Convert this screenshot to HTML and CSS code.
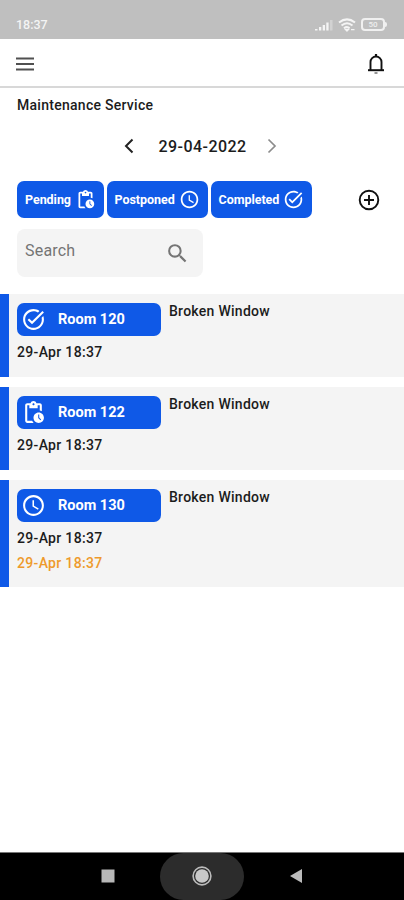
FILE: index.html
```
<!DOCTYPE html>
<html lang="en">
<head>
<meta charset="utf-8">
<title>Maintenance Service</title>
<link rel="stylesheet" href="styles.css">
</head>
<body>
<svg class="sprite" aria-hidden="true">
  <symbol id="pending" viewBox="0 0 24 24"><path d="M17 12c-2.76 0-5 2.24-5 5s2.24 5 5 5 5-2.24 5-5-2.24-5-5-5zm1.65 7.35L16.5 17.2V14h1v2.79l1.85 1.85-.7.71zM18 3h-3.18C14.4 1.84 13.3 1 12 1s-2.4.84-2.82 2H6c-1.1 0-2 .9-2 2v15c0 1.1.9 2 2 2h6.11c-.59-.57-1.07-1.25-1.42-2H6V5h2v3h8V5h2v5.08c.71.1 1.38.31 2 .6V5c0-1.1-.9-2-2-2zm-6 2c-.55 0-1-.45-1-1s.45-1 1-1 1 .45 1 1-.45 1-1 1z"/></symbol>
  <symbol id="clock" viewBox="0 0 24 24"><path d="M11.99 2C6.47 2 2 6.48 2 12s4.47 10 9.99 10C17.52 22 22 17.52 22 12S17.52 2 11.99 2zM12 20c-4.42 0-8-3.58-8-8s3.58-8 8-8 8 3.58 8 8-3.58 8-8 8zm.5-13H11v6l5.25 3.15.75-1.23-4.5-2.67z"/></symbol>
  <symbol id="done" viewBox="0 0 24 24"><path d="M22 5.18L10.59 16.6l-4.24-4.24 1.41-1.41 2.83 2.83 10-10L22 5.18zm-2.21 5.04c.13.57.21 1.17.21 1.78 0 4.42-3.58 8-8 8s-8-3.58-8-8 3.58-8 8-8c1.58 0 3.04.46 4.28 1.25l1.44-1.44C16.1 2.67 14.13 2 12 2 6.48 2 2 6.48 2 12s4.48 10 10 10 10-4.48 10-10c0-1.19-.22-2.33-.6-3.39l-1.61 1.61z"/></symbol>
</svg>
<div class="screen">
  <div class="status">
    <span class="time">18:37</span>
    <div class="indicators">
      <svg width="20" height="12" viewBox="0 0 20 12"><path d="M1 11.500V10h2.500v1.500zM5 11.500V8h2.300v3.500zM8.700 11.500V6H11v5.500zM12.300 11.500V3.500h2.300v8z" fill="#f4f4f4"/><path d="M16 11.500V1h2.500v10.500z" fill="#d2d2d2"/></svg>
      <svg width="18" height="14" viewBox="0 0 18 14" fill="none" stroke="#f4f4f4" stroke-width="2"><path d="M1 4.500Q9-1.800 17 4.500M3.500 7.500Q9 3 14.500 7.500M6 10.200Q9 7.800 11.500 10.200"/><path d="M7.500 11.500L9 13l1.500-1.500zM13 11.700h3.500" stroke-width="1.300"/></svg>
      <div class="battery"><span class="cell">50</span><span class="nub"></span></div>
    </div>
  </div>
  <header class="topbar">
    <svg width="20" height="16" viewBox="0 0 20 16"><path d="M1 2.500h18M1 8h18M1 13.500h18" stroke="#505050" stroke-width="2.200"/></svg>
    <svg width="18" height="22" viewBox="0 0 18 22" fill="none" stroke="#111"><path d="M3.500 17V9a5.500 5.500 0 0 1 11 0v8" stroke-width="1.900"/><path d="M1 17.200h16" stroke-width="2"/><path d="M9 1v2.500" stroke-width="2.200"/><path d="M7.500 20h3" stroke="#888" stroke-width="1.800"/></svg>
  </header>
  <h1 class="title">Maintenance Service</h1>
  <div class="date">
    <svg width="12" height="16" viewBox="0 0 12 16" fill="none" stroke="#222" stroke-width="2"><path d="M9.500 1.500L3 8l6.500 6.500"/></svg>
    <span>29-04-2022</span>
    <svg width="12" height="16" viewBox="0 0 12 16" fill="none" stroke="#8c8c8c" stroke-width="1.700"><path d="M2.500 1.500L9 8l-6.500 6.500"/></svg>
  </div>
  <div class="filters">
    <button class="filter pending"><span>Pending</span><svg><use href="#pending"/></svg></button>
    <button class="filter postponed"><span>Postponed</span><svg><use href="#clock"/></svg></button>
    <button class="filter completed"><span>Completed</span><svg><use href="#done"/></svg></button>
    <svg class="add" viewBox="0 0 22 22" fill="none" stroke="#111" stroke-width="1.900"><circle cx="11" cy="11" r="9.300"/><path d="M11 6v10M6 11h10"/></svg>
  </div>
  <div class="search">
    <span>Search</span>
    <svg viewBox="0 0 24 24"><path d="M15.500 14h-.79l-.28-.27A6.471 6.471 0 0 0 16 9.500 6.500 6.500 0 1 0 9.500 16c1.610 0 3.090-.59 4.230-1.570l.27.28v.79l5 4.990L20.490 19l-4.990-5zm-6 0C7.010 14 5 11.990 5 9.500S7.010 5 9.500 5 14 7.010 14 9.500 11.990 14 9.500 14z"/></svg>
  </div>
  <main class="list">
    <article class="card">
      <div class="room"><svg><use href="#done"/></svg><span>Room 120</span></div>
      <p class="issue">Broken Window</p>
      <p class="stamp">29-Apr 18:37</p>
    </article>
    <article class="card">
      <div class="room"><svg><use href="#pending"/></svg><span>Room 122</span></div>
      <p class="issue">Broken Window</p>
      <p class="stamp">29-Apr 18:37</p>
    </article>
    <article class="card tall">
      <div class="room"><svg><use href="#clock"/></svg><span>Room 130</span></div>
      <p class="issue">Broken Window</p>
      <p class="stamp">29-Apr 18:37</p>
      <p class="stamp late">29-Apr 18:37</p>
    </article>
  </main>
  <nav class="nav">
    <svg width="14" height="14"><rect x="0.500" y="0.500" width="13" height="13" fill="#b8b8b8"/></svg>
    <div class="home"><svg width="20" height="20" viewBox="0 0 20 20"><circle cx="10" cy="10" r="8.900" fill="none" stroke="#bbb" stroke-width="1.600"/><circle cx="10" cy="10" r="6.800" fill="#c8c8c8"/></svg></div>
    <svg width="14" height="16" viewBox="0 0 14 16"><path d="M13 1v14L1 8z" fill="#bbb"/></svg>
  </nav>
</div>
</body>
</html>
```
FILE: styles.css
```
* { box-sizing: border-box; }
body { margin: 0; background: #fff; color: #1c1c1c; font-family: Roboto, "Liberation Sans", sans-serif; }
h1, p { margin: 0; }
svg { display: block; flex: none; }
.sprite { position: absolute; width: 0; height: 0; }
.screen { width: 404px; height: 900px; display: flex; flex-direction: column; overflow: hidden; }
.status { height: 39px; background: #bfbfbf; padding: 11px 17px 0 16px; display: flex; justify-content: space-between; }
.time { color: #f4f4f4; font-size: 12.500px; line-height: 28px; font-weight: 500; height: 28px; }
.indicators { display: flex; align-items: center; gap: 4px; height: 27px; }
.battery { display: flex; align-items: center; margin-left: 1px; }
.cell { width: 24px; height: 13px; border: 2px solid #f0f0f0; border-radius: 4px; color: #eee; font-size: 8px; line-height: 9px; text-align: center; font-weight: 500; }
.nub { width: 2px; height: 5px; background: #f0f0f0; border-radius: 0 2px 2px 0; }
.topbar { height: 49px; border-bottom: 2px solid #d8d8d8; padding: 2px 19px 0 15px; display: flex; align-items: center; justify-content: space-between; }
.title { height: 34px; padding-left: 17px; font-size: 14px; line-height: 34px; font-weight: 500; letter-spacing: .27px; }
.date { height: 48px; display: flex; justify-content: center; align-items: center; gap: 23px; padding-right: 3px; font-size: 16px; font-weight: 500; letter-spacing: .45px; }
.date svg:last-child { margin-left: -4px; }
.filters { margin-top: 11px; height: 37px; padding: 0 24px 0 17px; display: flex; gap: 3px; align-items: center; }
.filter { height: 37px; border: 0; border-radius: 7px; background: #0f59e7; color: #fff; font-family: inherit; font-size: 12.500px; font-weight: 700; letter-spacing: -.04px; padding: 0 8px; display: flex; align-items: center; justify-content: space-between; }
.filter svg { width: 21px; height: 21px; fill: #fff; }
.pending { width: 87px; }
.postponed, .completed { width: 101px; padding-left: 7.5px; }
.add { width: 22px; height: 22px; margin-left: auto; }
.search { width: 186px; height: 48px; margin: 11px 0 0 17px; padding: 0 13px 0 8px; border-radius: 8px; background: #f4f4f4; display: flex; align-items: center; justify-content: space-between; color: #747474; font-size: 16px; letter-spacing: .2px; }
.search span { padding-bottom: 6px; }
.search svg { width: 25px; height: 25px; fill: #757575; }
.list { margin-top: 17px; display: flex; flex-direction: column; gap: 10px; }
.card { height: 83px; border-left: 9px solid #0f59e7; background: #f4f4f4; padding: 9px 8px 0; display: grid; grid-template-columns: 144px 1fr; grid-template-rows: 34px; grid-auto-rows: 25px; column-gap: 8px; align-content: start; }
.card.tall { height: 107px; }
.room { height: 33px; border-radius: 7px; background: #0f59e7; color: #fff; padding-left: 4px; display: flex; align-items: center; gap: 12px; font-size: 14.500px; font-weight: 700; }
.room svg { width: 25px; height: 25px; fill: #fff; }
.issue { font-size: 14px; line-height: 16px; font-weight: 500; letter-spacing: .27px; }
.stamp { grid-column: 1; font-size: 14px; line-height: 31px; font-weight: 500; letter-spacing: .32px; }
.late { color: #ee9a2c; }
.nav { margin-top: auto; height: 48px; background: #000; border-top: 1px solid #777; display: flex; justify-content: center; align-items: center; gap: 45px; padding-bottom: 1px; }
.home { width: 84px; height: 47px; border-radius: 24px; background: #2c2c2c; display: flex; align-items: center; justify-content: center; }
```
